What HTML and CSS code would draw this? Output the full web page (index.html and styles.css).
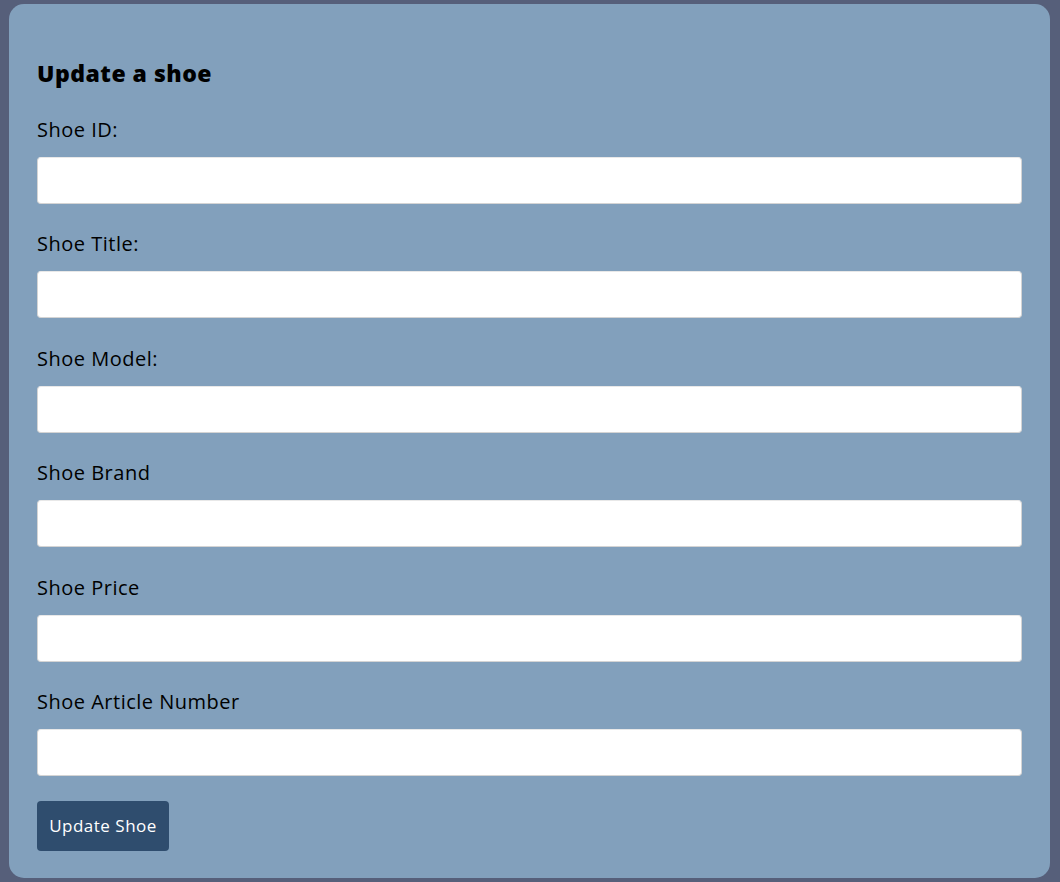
FILE: index.html
```html
<!DOCTYPE html>
<html lang="en">
<head>
<meta charset="utf-8">
<title>Update a shoe</title>
<link rel="stylesheet" href="styles.css">
</head>
<body>
<main class="card">
  <h2 class="title">Update a shoe</h2>
  <form class="form">
    <label class="label" for="id">Shoe ID:</label>
    <input class="input" id="id" type="text">
    <label class="label" for="title">Shoe Title:</label>
    <input class="input" id="title" type="text">
    <label class="label" for="model">Shoe Model:</label>
    <input class="input" id="model" type="text">
    <label class="label" for="brand">Shoe Brand</label>
    <input class="input" id="brand" type="text">
    <label class="label" for="price">Shoe Price</label>
    <input class="input" id="price" type="text">
    <label class="label" for="article">Shoe Article Number</label>
    <input class="input" id="article" type="text">
    <button class="button" type="button">Update Shoe</button>
  </form>
</main>
</body>
</html>
```
FILE: styles.css
```css
html, body {
  margin: 0;
  height: 100%;
}
body {
  background: #565f7a;
  padding: 4px 10px 4px 9px;
  box-sizing: border-box;
  font-family: "Open Sans", "DejaVu Sans", sans-serif;
  color: #000;
}
.card {
  background: #82a0bc;
  border-radius: 15px;
  padding: 28px 28px 27px 28px;
  box-sizing: border-box;
  height: 874px;
}
.title {
  margin: 24.5px 0 0 0;
  font-size: 23px;
  line-height: 33px;
  font-weight: 800;
  letter-spacing: 0.5px;
}
.form {
  display: flex;
  flex-direction: column;
  align-items: flex-start;
}
.label {
  display: block;
  font-size: 20px;
  line-height: 28px;
  letter-spacing: 0.5px;
  margin: 26.5px 0 13px 0;
}
.input + .label {
  margin-top: 26.4px;
}
.input {
  align-self: stretch;
  height: 47px;
  box-sizing: border-box;
  border: 1px solid #d4d4d4;
  border-top-color: #e8e8e8;
  border-radius: 4px;
  background: #fff;
  margin: 0;
  padding: 0 10px;
  font-size: 16px;
}
.button {
  margin-top: 25px;
  width: 132px;
  height: 50px;
  border: none;
  border-radius: 4px;
  background: #2f4d6e;
  color: #fff;
  font-family: inherit;
  font-size: 17px;
  letter-spacing: 0.5px;
  padding: 0;
}
```
